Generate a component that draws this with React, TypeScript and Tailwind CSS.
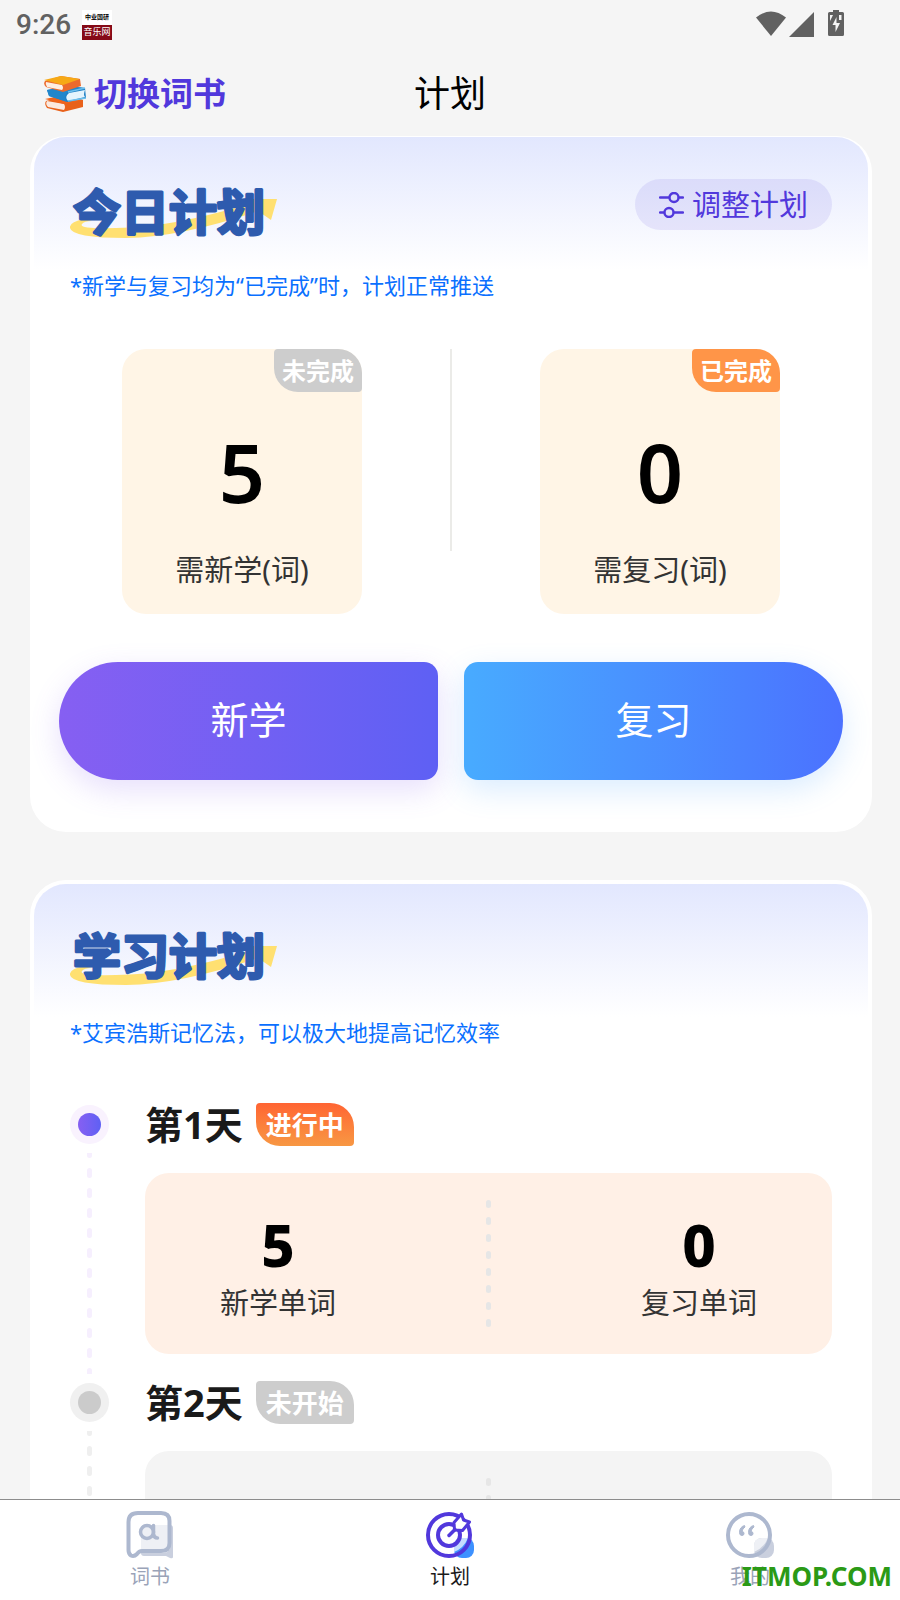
import { useState } from 'react';
import type { ReactNode } from 'react';

type Day = {
  day: number;
  active: boolean;
  status: string;
  learn: number;
  review: number;
};

const days: Day[] = [
  { day: 1, active: true, status: '进行中', learn: 5, review: 0 },
  { day: 2, active: false, status: '未开始', learn: 5, review: 5 },
];

export default function App() {
  const [tab, setTab] = useState('plan');

  return (
    <div className="relative flex h-screen flex-col overflow-hidden bg-[#f5f5f5] font-['Noto_Sans','Noto_Sans_CJK_SC',sans-serif] text-black">
      <StatusBar />

      {/* Header */}
      <header className="grid h-[84px] shrink-0 grid-cols-[1fr_auto_1fr] items-center px-11">
        <button className="flex items-center gap-2 text-[33px] leading-10 font-bold text-[#5138dc]">
          <BooksIcon />
          切换词书
        </button>
        <h1 className="text-[36px] leading-10">计划</h1>
      </header>

      <main className="min-h-0 flex-1 overflow-y-auto pr-7 pl-[30px] [scrollbar-width:none]">
        {/* Plano do dia */}
        <Card
          title="今日计划"
          titleAlign="items-end"
          note="*新学与复习均为“已完成”时，计划正常推送"
          className="border-t"
          action={
            <button className="flex h-[51px] items-center gap-2 rounded-full bg-[#5138dc]/10 px-6 text-[29px] leading-9 text-[#5138dc]">
              <SlidersIcon />
              调整计划
            </button>
          }
        >
          <div className="mt-12 flex">
            <StatBox value={5} label="需新学(词)" badge="未完成" badgeColor="bg-[#cdcdcd]" />
            <div className="h-[202px] w-0.5 bg-[#ebebe8]" />
            <StatBox value={0} label="需复习(词)" badge="已完成" badgeColor="bg-[#ff9548]" />
          </div>
          <div className="mt-12 grid grid-cols-2 gap-[26px] px-[25px] pb-12">
            <button className="h-[118px] rounded-l-[59px] rounded-r-[14px] bg-linear-to-r from-[#865ff2] to-[#5e60f4] pb-1 text-[38px] text-white shadow-[0_10px_30px_rgba(134,95,242,0.2)]">
              新学
            </button>
            <button className="h-[118px] rounded-l-[14px] rounded-r-[59px] bg-linear-to-r from-[#48abff] to-[#4b71ff] pb-1 text-[38px] text-white shadow-[0_10px_30px_rgba(72,160,255,0.2)]">
              复习
            </button>
          </div>
        </Card>

        {/* Plano de estudo */}
        <Card
          title="学习计划"
          titleAlign="items-center"
          note="*艾宾浩斯记忆法，可以极大地提高记忆效率"
          className="mt-12"
        >
          <ol className="mt-[55px] px-9">
            {days.map((d) => (
              <DayItem key={d.day} item={d} />
            ))}
          </ol>
        </Card>
      </main>

      {/* Tab bar */}
      <nav className="grid h-[101px] shrink-0 grid-cols-3 border-t border-[#8c8c8c] bg-white">
        <TabButton label="词书" active={tab === 'book'} onClick={() => setTab('book')} icon={<BookTabIcon />} />
        <TabButton label="计划" active={tab === 'plan'} onClick={() => setTab('plan')} icon={<PlanTabIcon />} />
        <TabButton label="我的" active={tab === 'me'} onClick={() => setTab('me')} icon={<MeTabIcon />} />
      </nav>
      <span className="pointer-events-none absolute right-2 bottom-1.5 text-[26px] leading-9 font-bold text-[#2b9a16]">
        ITMOP.COM
      </span>
    </div>
  );
}

function StatusBar() {
  return (
    <div className="flex h-[52px] shrink-0 items-start justify-between pr-14 pl-4 text-[#616161]">
      <div className="flex items-center gap-[11px] pt-[9px]">
        <span className="font-[Roboto,sans-serif] text-[28px] leading-8 font-medium">9:26</span>
        <span className="flex h-[30px] w-[30px] flex-col bg-white text-center">
          <span className="h-[15px] font-['Noto_Sans_CJK_SC',sans-serif] text-[6px] leading-[14px] font-bold text-black">中业国研</span>
          <span className="h-[15px] bg-[#860a17] font-['Noto_Sans_CJK_SC',sans-serif] text-[9px] leading-[14px] text-white">音乐网</span>
        </span>
      </div>
      <svg className="mt-2.5 h-7 w-[88px]" viewBox="0 0 88 28" fill="currentColor">
        <path d="M0 7.500Q15 -4.500 30 7.500L15 26Z" />
        <path d="M33 27L58 2V27Z" />
        <path fillRule="evenodd" d="M77 0h6v2h3.500q1.500 0 1.500 1.500v21q0 1.500-1.500 1.500h-13q-1.500 0-1.500-1.500v-21q0-1.500 1.500-1.500H77ZM74 5v6l3-6ZM80.500 7l-4 8H79.500v7l4.500-9h-3.500ZM83 5v5h2.500V5Z" />
      </svg>
    </div>
  );
}

function Card({
  title, titleAlign, note, action, className, children,
}: {
  title: string;
  titleAlign: string;
  note: string;
  action?: ReactNode;
  className: string;
  children: ReactNode;
}) {
  return (
    <section className={`rounded-[36px] border-4 border-white bg-white ${className}`}>
      <div className="rounded-t-[32px] bg-[linear-gradient(#e2e7fe,#ffffff_133px)]">
        <div className="flex h-[100px] items-start justify-between px-9 pt-[42px]">
          <h2 className={`relative flex h-[54px] w-[207px] ${titleAlign}`}>
            <svg className="absolute top-[19px] left-0 h-10 w-[207px]" viewBox="0 0 207 40" fill="#ffe071">
              <path d="M14 21Q-1 24 0 30Q2 40 56 40Q112 39 188 13L201 22L207 1H176L182 5Q100 30 46 30Q8 31 12 26Q14 23 22 23Z" />
            </svg>
            {/* traço arredondado em volta das letras */}
            <svg className="relative h-12 w-full overflow-visible">
              <text
                x="3"
                y="45"
                fill="#2e5bae"
                stroke="#2e5bae"
                strokeWidth="3"
                strokeLinejoin="round"
                className="font-['Noto_Sans_CJK_SC',sans-serif] text-[48px] font-bold"
              >
                {title}
              </text>
            </svg>
          </h2>
          {action}
        </div>
        <p className="mt-8 px-9 text-[22px] leading-8 text-[#0a70ff]">{note}</p>
      </div>
      {children}
    </section>
  );
}

function Badge({ className, children }: { className: string; children: ReactNode }) {
  return (
    <span
      className={`flex h-[43px] items-center rounded-tl-[4px] rounded-tr-[24px] rounded-br-[4px] rounded-bl-[24px] font-bold text-white ${className}`}
    >
      {children}
    </span>
  );
}

function StatBox({
  value, label, badge, badgeColor,
}: {
  value: number;
  label: string;
  badge: string;
  badgeColor: string;
}) {
  return (
    <div className="flex flex-1 justify-center">
      <div className="relative w-60 rounded-[24px] bg-[#fff5e6] pt-[81px] pb-[26px] text-center">
        <div className="absolute top-0 right-0">
          <Badge className={`px-2 text-[24px] leading-8 ${badgeColor}`}>{badge}</Badge>
        </div>
        <div className="text-[81px] leading-[84px] font-semibold">{value}</div>
        <div className="mt-[38px] text-[29px] leading-9 text-[#333]">{label}</div>
      </div>
    </div>
  );
}

function DayItem({ item }: { item: Day }) {
  const { active } = item;
  return (
    <li className="flex gap-9">
      <div className="flex w-[39px] shrink-0 flex-col items-center pt-0.5 pb-[7px]">
        <span className={`flex h-[39px] w-[39px] items-center justify-center rounded-full ${active ? 'bg-[#f9f2fe]' : 'bg-[#f0f0f0]'}`}>
          <span className={`h-[23px] w-[23px] rounded-full ${active ? 'bg-linear-to-r from-[#865ff2] to-[#5e60f4]' : 'bg-[#cbcbcb]'}`} />
        </span>
        <svg className={`mt-[9px] h-0 w-[5px] flex-1 ${active ? 'text-[#f6effe]' : 'text-[#efefef]'}`}>
          <line x1="2.5" y1="0" x2="2.5" y2="100%" stroke="currentColor" strokeWidth="5" strokeLinecap="round" strokeDasharray="5 15" strokeDashoffset="2.5" />
        </svg>
      </div>
      <div className="flex-1 pb-[27px]">
        <div className="flex items-center gap-[13px]">
          <h3 className="text-[38px] leading-[43px] font-bold text-[#1a1a1a]">第{item.day}天</h3>
          <Badge className={`px-2.5 text-[26px] leading-8 ${active ? 'bg-linear-to-b from-[#ff6433] to-[#f79743]' : 'bg-[#cdcdcd]'}`}>
            {item.status}
          </Badge>
        </div>
        <div className={`mt-[27px] flex h-[181px] items-center justify-between rounded-[24px] px-[75px] ${active ? 'bg-[#fff0e6]' : 'bg-[#f4f4f4]'}`}>
          <DayCount value={item.learn} label="新学单词" />
          <svg className="h-[128px] w-[5px] text-[#e6e6e6]">
            <line x1="2.5" y1="2.5" x2="2.5" y2="100%" stroke="currentColor" strokeWidth="5" strokeLinecap="round" strokeDasharray="3 14" />
          </svg>
          <DayCount value={item.review} label="复习单词" />
        </div>
      </div>
    </li>
  );
}

function DayCount({ value, label }: { value: number; label: string }) {
  return (
    <div className="text-center">
      <div className="text-[58px] leading-[76px] font-extrabold">{value}</div>
      <div className="mt-0.5 text-[29px] leading-9 text-[#333]">{label}</div>
    </div>
  );
}

function TabButton({
  label, active, onClick, icon,
}: {
  label: string;
  active: boolean;
  onClick: () => void;
  icon: ReactNode;
}) {
  return (
    <button
      onClick={onClick}
      className={`flex flex-col items-center gap-[3px] pt-2.5 text-[20px] leading-7 ${active ? 'text-[#1a1a1a]' : 'text-[#9aa3b8]'}`}
    >
      {icon}
      {label}
    </button>
  );
}

function SlidersIcon() {
  return (
    <svg className="h-[26px] w-[25px]" viewBox="0 0 25 26" fill="none" stroke="currentColor" strokeWidth="2.400" strokeLinecap="round">
      <path d="M1 5.500H10M20 5.500H24M1 20.500H5M15 20.500H24" />
      <circle cx="15" cy="5.500" r="4.500" />
      <circle cx="10" cy="20.500" r="4.500" />
    </svg>
  );
}

function BooksIcon() {
  return (
    <svg className="h-9 w-[42px]" viewBox="0 0 42 36">
      <path d="M2 25L22 20L39 24V31L19 36L3 32Q0 28 2 25Z" fill="#e8611a" />
      <path d="M3 25L20 28Q22 31 20 34L4 31Q1 28 3 25Z" fill="#fbe9df" />
      <path d="M1 23L20 19L39 24L20 28Z" fill="#f0641c" />
      <path d="M3 14L24 10L41 12L42 22L24 26L5 20Z" fill="#1f7fc4" />
      <path d="M25 17L41 14Q39 19 41 21L24 25Q20 21 25 17Z" fill="#e4f4fd" />
      <path d="M3 14L24 10L41 12L24 16Q19 20 23 26L5 20Z" fill="#2286cb" />
      <path d="M24 16L41 12M24 25L42 22" stroke="#6cc0ee" strokeWidth="1.500" />
      <path d="M1 5L17 0L36 3L37 10L19 16L2 11Q-1 8 1 5Z" fill="#ec6a2c" />
      <path d="M2 6L18 9Q20 12 18 14L3 11Q1 8 2 6Z" fill="#fdeee2" />
      <path d="M0 4L17 0L36 3L19 9Z" fill="#f6a916" />
    </svg>
  );
}

function BookTabIcon() {
  return (
    <svg className="h-[50px] w-12" viewBox="0 0 48 50" fill="none" strokeLinecap="round" strokeLinejoin="round">
      <path d="M44 15Q47 15 47 18V47Q47 49 44 48L40 46H18Q15 46 15 43H38Q44 42 44 36Z" fill="#c9cfde" />
      <path d="M15 20Q15 15 20 15H43V36Q43 41 38 41H15Z" fill="#eef0f5" />
      <path d="M12 3H35Q43.500 3 43.500 11V33Q43.500 41 35 41H16Q13 41 11 44Q8 47 5 45.500Q2.500 44 2.500 40V12Q2.500 3 12 3Z" stroke="#adb8cf" strokeWidth="4" />
      <circle cx="21" cy="22" r="6.500" stroke="#adb8cf" strokeWidth="3.500" />
      <path d="M27.500 15.500V24Q28 28 31.500 28" stroke="#adb8cf" strokeWidth="3.500" />
    </svg>
  );
}

function PlanTabIcon() {
  return (
    <svg className="h-[50px] w-12" viewBox="0 0 48 50" fill="none" strokeLinecap="round" strokeLinejoin="round">
      <rect x="28" y="28" width="20" height="20" rx="8" fill="#3d91ff" />
      <path d="M28 36Q28 28 36 28H42Q38 38 28 42Z" fill="#c6ddff" />
      <circle cx="23" cy="25" r="21" stroke="#5138dc" strokeWidth="4" />
      <circle cx="23" cy="25" r="11" stroke="#5138dc" strokeWidth="4" />
      <path d="M28 12.500L35.500 4L37.500 10L43.500 12L36.500 20.500L28.500 20Z" fill="#fff" stroke="#5138dc" strokeWidth="3" />
      <path d="M23 25.500L29 19.500" stroke="#5138dc" strokeWidth="3.500" />
    </svg>
  );
}

function MeTabIcon() {
  return (
    <svg className="h-[50px] w-12" viewBox="0 0 48 50" fill="none">
      <rect x="28" y="28" width="20" height="20" rx="8" fill="#c9cfde" />
      <path d="M28 36Q28 28 36 28H42Q38 38 28 42Z" fill="#eef0f5" />
      <circle cx="23" cy="25" r="21" stroke="#adb8cf" strokeWidth="4" />
      <path d="M18.500 15.500Q13.500 17 13.500 22.500Q13.500 25.500 16 25.500Q18 25.500 18 23.500Q18 21.500 16 21.500Q16.500 18.500 19 17ZM27.500 15.500Q22.500 17 22.500 22.500Q22.500 25.500 25 25.500Q27 25.500 27 23.500Q27 21.500 25 21.500Q25.500 18.500 28 17Z" fill="#adb8cf" stroke="#adb8cf" strokeWidth="1" />
    </svg>
  );
}
